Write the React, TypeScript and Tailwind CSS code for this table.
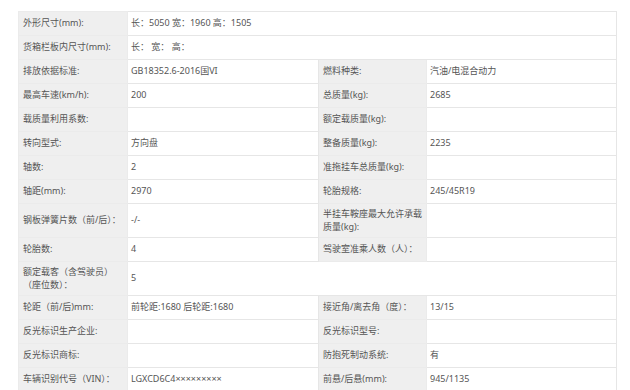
import React from "react";

type Row =
  | { kind: "full"; label: string; value: string }
  | { kind: "pair"; l1: string; v1: string; l2: string; v2: string };

const rows: Row[] = [
  { kind: "full", label: "外形尺寸(mm):", value: "长：5050 宽：1960 高：1505" },
  { kind: "full", label: "货箱栏板内尺寸(mm):", value: "长： 宽： 高：" },
  { kind: "pair", l1: "排放依据标准:", v1: "GB18352.6-2016国VI", l2: "燃料种类:", v2: "汽油/电混合动力" },
  { kind: "pair", l1: "最高车速(km/h):", v1: "200", l2: "总质量(kg):", v2: "2685" },
  { kind: "pair", l1: "载质量利用系数:", v1: "", l2: "额定载质量(kg):", v2: "" },
  { kind: "pair", l1: "转向型式:", v1: "方向盘", l2: "整备质量(kg):", v2: "2235" },
  { kind: "pair", l1: "轴数:", v1: "2", l2: "准拖挂车总质量(kg):", v2: "" },
  { kind: "pair", l1: "轴距(mm):", v1: "2970", l2: "轮胎规格:", v2: "245/45R19" },
  { kind: "pair", l1: "钢板弹簧片数（前/后）：", v1: "-/-", l2: "半挂车鞍座最大允许承载质量(kg):", v2: "" },
  { kind: "pair", l1: "轮胎数:", v1: "4", l2: "驾驶室准乘人数（人）：", v2: "" },
  { kind: "full", label: "额定载客（含驾驶员）（座位数）：", value: "5" },
  { kind: "pair", l1: "轮距（前/后)mm:", v1: "前轮距:1680 后轮距:1680", l2: "接近角/离去角（度）：", v2: "13/15" },
  { kind: "pair", l1: "反光标识生产企业:", v1: "", l2: "反光标识型号:", v2: "" },
  { kind: "pair", l1: "反光标识商标:", v1: "", l2: "防抱死制动系统:", v2: "有" },
  { kind: "pair", l1: "车辆识别代号（VIN）：", v1: "LGXCD6C4×××××××××", l2: "前悬/后悬(mm):", v2: "945/1135" },
];

const labelCls =
  "bg-[#efefef] border border-[#ebebeb] px-[4px] py-[4px] align-middle text-left font-normal";
const valueCls = "bg-white border border-[#e6e6e6] px-[3px] py-[4px] align-middle";

export default function App() {
  return (
    <div
      className="w-[630px] h-[390px] bg-white overflow-hidden pt-[11px] pl-[18px] text-[9px] leading-[12.5px] text-[#555]"
      style={{ fontFamily: '"Noto Sans", "Noto Sans CJK SC", sans-serif' }}
    >
      <table className="border-collapse table-fixed w-[598px]">
        <colgroup>
          <col className="w-[109px]" />
          <col className="w-[191px]" />
          <col className="w-[108px]" />
          <col className="w-[190px]" />
        </colgroup>
        <tbody>
          {rows.map((r, i) =>
            r.kind === "full" ? (
              <tr key={i} className="h-[24px]">
                <th className={labelCls}>{r.label}</th>
                <td className={valueCls} colSpan={3}>
                  {r.value}
                </td>
              </tr>
            ) : (
              <tr key={i} className="h-[24px]">
                <th className={labelCls}>{r.l1}</th>
                <td className={valueCls}>{r.v1}</td>
                <th className={labelCls}>{r.l2}</th>
                <td className={valueCls}>{r.v2}</td>
              </tr>
            )
          )}
        </tbody>
      </table>
    </div>
  );
}
